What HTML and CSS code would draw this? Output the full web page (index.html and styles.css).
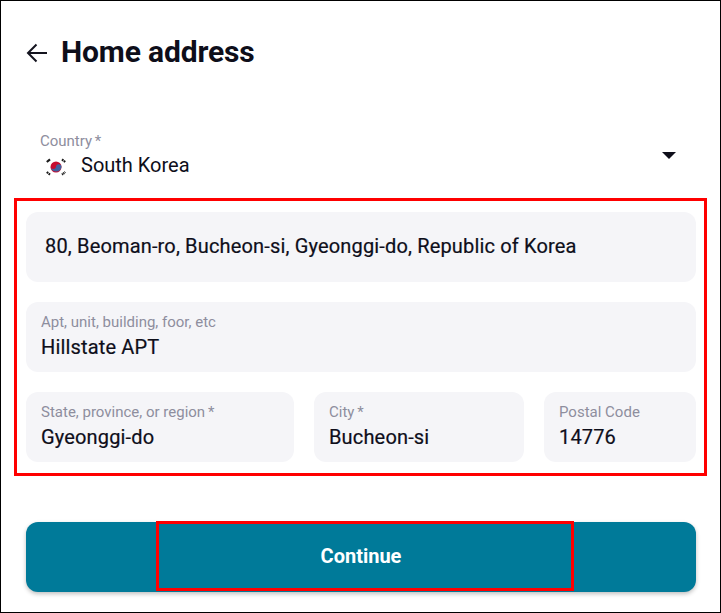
FILE: index.html
```html
<!DOCTYPE html>
<html lang="en">
<head>
<meta charset="utf-8">
<title>Home address</title>
<link rel="stylesheet" href="styles.css">
</head>
<body>
<main class="screen">
  <header class="header">
    <svg class="back" viewBox="0 0 24 24" width="24" height="24" aria-hidden="true"><path d="M21 12H2M10.500 3.500L2 12L10.500 20.500" fill="none" stroke="#14141f" stroke-width="2"/></svg>
    <h1 class="title">Home address</h1>
  </header>
  <section class="country">
    <div class="country-text">
      <div class="label">Country <span class="req">*</span></div>
      <div class="country-value">
        <svg class="flag" viewBox="0 0 24 20" width="24" height="20" aria-hidden="true">
          <circle cx="12" cy="10" r="5.5" fill="#c60c30"/>
          <path d="M6.6 9.200A5.500 5.500 0 0 0 17.500 10A2.750 2.750 0 0 0 12 10A2.750 2.750 0 0 1 6.600 9.200Z" fill="#40609f"/>
          <g fill="none" stroke="#1a1a1a" stroke-width="2.200">
            <path d="M2.800 5L6 2.400"/>
            <path d="M18 2.400L21.200 5" stroke-dasharray="1.800 .6"/>
            <path d="M2.800 15L6 17.600" stroke-dasharray="1.800 .6"/>
            <path d="M18 17.600L21.200 15" stroke-dasharray="1.200 .5"/>
          </g>
        </svg>
        <span>South Korea</span>
      </div>
    </div>
    <div class="caret"></div>
  </section>
  <section class="fields">
    <div class="field field-single"><div class="value">80, Beoman-ro, Bucheon-si, Gyeonggi-do, Republic of Korea</div></div>
    <div class="field"><div class="label">Apt, unit, building, foor, etc</div><div class="value">Hillstate APT</div></div>
    <div class="field-row">
      <div class="field"><div class="label">State, province, or region <span class="req">*</span></div><div class="value">Gyeonggi-do</div></div>
      <div class="field"><div class="label">City <span class="req">*</span></div><div class="value">Bucheon-si</div></div>
      <div class="field"><div class="label">Postal Code</div><div class="value">14776</div></div>
    </div>
    <div class="highlight highlight-fields"></div>
  </section>
  <div class="action">
    <button class="continue" type="button">Continue</button>
    <div class="highlight highlight-button"></div>
  </div>
</main>
</body>
</html>
```
FILE: styles.css
```css
* { box-sizing: border-box; }
html, body { margin: 0; height: 100%; }
body { background: #fff; font-family: Roboto, "Liberation Sans", sans-serif; color: #0e0e1a; }
.screen { width: 721px; height: 613px; border: 1px solid #000; padding: 0 24px 0 25px; display: flex; flex-direction: column; overflow: hidden; }
.header { display: flex; align-items: center; gap: 11px; height: 34px; margin-top: 34px; }
.back { flex: none; margin-top: 2px; }
.title { margin: 0; font-size: 30px; font-weight: 700; line-height: 34px; letter-spacing: -.15px; }
.country { display: flex; align-items: center; justify-content: space-between; height: 44px; margin-top: 64px; padding: 0 20px 0 14px; }
.country-text { display: flex; flex-direction: column; }
.country .label { line-height: 17px; }
.country-value { display: flex; align-items: center; gap: 13px; height: 26px; font-size: 20px; margin-top: 2px; padding-left: 4px; }
.flag { flex: none; margin-top: 5px; }
.caret { width: 0; height: 0; border-left: 7px solid transparent; border-right: 7px solid transparent; border-top: 7px solid #0e0e1a; margin-top: 1px; }
.label { font-size: 15px; line-height: 18px; color: #8e8e9e; }
.req { margin-left: -1px; }
.value { font-size: 20px; line-height: 24px; margin-top: 4px; letter-spacing: .16px; -webkit-text-stroke: .2px #0e0e1a; }
.fields { position: relative; display: flex; flex-direction: column; gap: 20px; margin-top: 35px; }
.field { height: 70px; background: #f5f5f8; border-radius: 12px; padding: 11px 15px; }
.field-single { display: flex; align-items: center; padding: 0 19px 2px; }
.field-single .value { margin: 0; }
.field-row { display: grid; grid-template-columns: 268px 210px 152px; gap: 20px; }
.action { position: relative; margin-top: 60px; }
.continue { display: block; width: 100%; height: 70px; border: 0; border-radius: 12px; background: #007a99; color: #fff; font: 700 20px Roboto, "Liberation Sans", sans-serif; padding: 0 0 2px; box-shadow: 0 2px 4px rgba(0,0,0,.25); }
.highlight { position: absolute; border: 3px solid #f00; pointer-events: none; }
.highlight-fields { left: -12px; top: -14px; width: 693px; height: 278px; }
.highlight-button { left: 130px; top: -1px; width: 418px; height: 70px; }
```
